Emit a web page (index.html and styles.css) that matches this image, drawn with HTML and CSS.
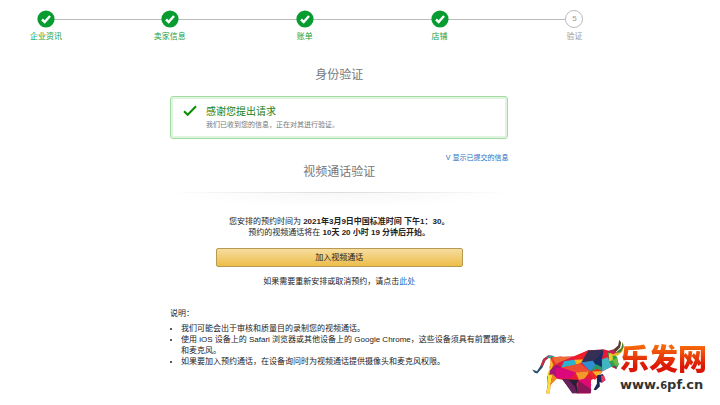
FILE: index.html
```html
<!DOCTYPE html>
<html lang="zh-CN">
<head>
<meta charset="utf-8">
<title>身份验证</title>
<meta name="viewport" content="width=device-width, initial-scale=1">
<link rel="stylesheet" href="styles.css">
</head>
<body>
<ol class="steps">
  <li class="step"><svg class="dot" viewBox="0 0 18 18" aria-hidden="true"><circle cx="9" cy="9" r="8.6"/><path d="M5 9.5 7.7 12 13 6"/></svg><span class="label">企业资讯</span></li>
  <li class="step"><svg class="dot" viewBox="0 0 18 18" aria-hidden="true"><circle cx="9" cy="9" r="8.6"/><path d="M5 9.5 7.7 12 13 6"/></svg><span class="label">卖家信息</span></li>
  <li class="step"><svg class="dot" viewBox="0 0 18 18" aria-hidden="true"><circle cx="9" cy="9" r="8.6"/><path d="M5 9.5 7.7 12 13 6"/></svg><span class="label">账单</span></li>
  <li class="step"><svg class="dot" viewBox="0 0 18 18" aria-hidden="true"><circle cx="9" cy="9" r="8.6"/><path d="M5 9.5 7.7 12 13 6"/></svg><span class="label">店铺</span></li>
  <li class="step pending"><span class="dot number">5</span><span class="label">验证</span></li>
</ol>

<main class="content">
  <h1 class="title">身份验证</h1>
  <section class="alert">
    <svg class="alert-icon" viewBox="0 0 14 12" aria-hidden="true"><path d="M1 6.2 4.7 9.8 13 1.2"/></svg>
    <div>
      <h2 class="alert-title">感谢您提出请求</h2>
      <p class="alert-text">我们已收到您的信息，正在对其进行验证。</p>
    </div>
  </section>
  <a class="details" href="#">V 显示已提交的信息</a>
  <h1 class="title">视频通话验证</h1>
  <div class="divider"></div>
  <section class="booking">
    <p>您安排的预约时间为 <b>2021年3月9日中国标准时间 下午1：30。</b></p>
    <p>预约的视频通话将在 <b>10天 20 小时 19 分钟后开始。</b></p>
    <button class="join" type="button">加入视频通话</button>
    <p>如果需要重新安排或取消预约，请点击<a href="#">此处</a></p>
  </section>
  <section class="notes">
    <p>说明：</p>
    <ul>
      <li>我们可能会出于审核和质量目的录制您的视频通话。</li>
      <li>使用 iOS 设备上的 Safari 浏览器或其他设备上的 Google Chrome，这些设备须具有前置摄像头<br>和麦克风。</li>
      <li>如果要加入预约通话，在设备询问时为视频通话提供摄像头和麦克风权限。</li>
    </ul>
  </section>
</main>

<aside class="brand">
  <svg class="bull" viewBox="30 24 285 172" aria-hidden="true">
    <path d="M36 119 50 124 61 108 69 87 84 77 101 78 99 84 85 84 76 91 67 113 51 131 42 128Z" fill="#264e70"/>
    <path d="M61 108 69 87 84 77 101 78 99 84 85 84 76 91 67 110Z" fill="#c72c42"/>
    <path d="M78 82 92 77 104 80 95 87Z" fill="#23a79b"/>
    <path d="M92 82 160 80 205 61 252 59 280 66 296 104 290 117 273 111 247 125 234 141 214 151 210 191 170 191 156 183 127 150 107 146 91 166 89 191 78 191 83 163 81 142 90 118Z" fill="#e51b34"/>
    <path d="M94 83 126 79 108 107 90 126 88 110 96 99Z" fill="#f0402b"/>
    <path d="M96 82 164 80 132 96 110 105Z" fill="#ed6b35"/>
    <path d="M91 84 99 105 85 142 82 132 90 115Z" fill="#f2c522"/>
    <path d="M90 121 108 103 124 112 104 146 83 161Z" fill="#a51572"/>
    <path d="M83 136 97 134 91 164 89 191 78 191 84 162Z" fill="#f6e534"/>
    <path d="M97 132 111 146 91 166Z" fill="#f18525"/>
    <path d="M108 102 160 80 164 91 145 104Z" fill="#df174b"/>
    <path d="M132 94 163 90 169 105 123 114Z" fill="#27b6ce"/>
    <path d="M163 81 205 61 227 64 203 88 163 90Z" fill="#ef1d28"/>
    <path d="M163 90 203 88 184 99 169 105Z" fill="#f6b51c"/>
    <path d="M123 113 181 101 211 124 167 128Z" fill="#ed4d32"/>
    <path d="M106 116 123 113 167 128 150 146 108 145Z" fill="#db087b"/>
    <path d="M167 128 211 124 190 151 177 151Z" fill="#f19a29"/>
    <path d="M127 148 177 151 169 163 176 191 157 191Z" fill="#252036"/>
    <path d="M126 148 145 149 165 172 170 190 157 191Z" fill="#68215b"/>
    <path d="M176 151 205 144 214 164 210 191 172 191Z" fill="#de0c72"/>
    <path d="M175 153 214 178 213 191 172 191Z" fill="#8e1658"/>
    <path d="M205 62 252 59 220 94 184 98Z" fill="#343055"/>
    <path d="M184 98 219 93 229 107 211 124Z" fill="#2d91d1"/>
    <path d="M220 94 249 62 261 79 247 112 229 107Z" fill="#162d66"/>
    <path d="M252 59 277 67 260 91 246 88Z" fill="#e81839"/>
    <path d="M246 88 264 82 276 111 247 124Z" fill="#3fb6c2"/>
    <path d="M211 124 229 103 247 112 245 126 219 125Z" fill="#259a67"/>
    <path d="M203 127 234 117 247 126 225 151Z" fill="#ee2a27"/>
    <path d="M217 125 247 124 234 143Z" fill="#f3b52d"/>
    <path d="M231 137 249 133 257 151 246 159 239 157 240 170 228 182 221 180 231 162Z" fill="#1c2556"/>
    <path d="M243 137 253 138 257 151 246 159Z" fill="#ec3a68"/>
    <path d="M264 65 280 67 292 82 297 104 290 117 279 112 268 94Z" fill="#2ba24d"/>
    <path d="M267 67 278 67 279 91 268 94Z" fill="#e8cf25"/>
    <path d="M278 91 291 84 297 104 288 109Z" fill="#71b843"/>
    <path d="M278 110 289 108 290 118Z" fill="#aa1d61"/>
    <path d="M262 64 282 58 295 47 299 29 304 38 301 53 287 67 269 70Z" fill="#5d3c31"/>
    <path d="M273 70 292 67 305 54 309 36 313 49 308 65 294 77 279 78Z" fill="#e4b71d"/>
    <path d="M286 69 305 54 309 36 311 52 303 67Z" fill="#44812e"/>
    <path d="M263 65 279 60 290 68 280 73Z" fill="#d41b58"/>
  </svg>
  <div class="brand-words">
    <div class="brand-name">乐发网</div>
    <div class="brand-url">www.<small>6</small>pf.cn</div>
  </div>
</aside>
</body>
</html>
```
FILE: styles.css
```css
* { box-sizing: border-box; }
body {
  margin: 0;
  background: #fff;
  color: #222;
  font: 8px/11px "Liberation Sans", "Noto Sans CJK SC", sans-serif;
}
h1, h2, p, ul, ol { margin: 0; padding: 0; font-weight: 400; }
a { color: #1a6fc4; text-decoration: none; }

.steps {
  display: flex;
  position: relative;
  list-style: none;
  padding: 10px 18% 0 30px;
}
.steps::before {
  content: "";
  position: absolute;
  top: 19px;
  left: 46px;
  right: calc(18% + 16px);
  height: 1px;
  background: #bbb;
}
.step { flex: 135 1 0; position: relative; color: #15a03c; }
.step:first-child { flex-grow: 124; }
.step:last-child { flex: 0 0 32px; }
.dot { display: block; width: 18px; height: 18px; margin-left: 7px; }
.dot circle { fill: #069c2f; }
.dot path { fill: none; stroke: #fff; stroke-width: 2.4; }
.number {
  border: 1px solid #bbb;
  border-radius: 50%;
  background: #fff;
  line-height: 16px;
  text-align: center;
}
.label { display: block; width: 32px; margin-top: 3px; text-align: center; white-space: nowrap; }
.pending { color: #999; }

.content { width: 47%; margin: 24px 0 0 170px; }
.title { color: #777; font-size: 12px; line-height: 18px; text-align: center; }
.alert {
  display: flex;
  gap: 9px;
  margin-top: 12px;
  padding: 7px 10px 7px 12px;
  border: 1px solid #a4dba4;
  border-radius: 3px;
  box-shadow: inset 0 0 0 2px #dff5df;
}
.alert-icon { flex: none; width: 14px; height: 12px; margin-top: 1px; }
.alert-icon path { fill: none; stroke: #089000; stroke-width: 2; }
.alert-title { color: #178217; font-size: 10px; line-height: 15px; }
.alert-text { color: #777; font-size: 7px; line-height: 12px; }
.details { display: block; margin: 14px 0 0; font-size: 7px; line-height: 10px; text-align: right; }
.divider {
  height: 16px;
  margin: 11px 0 8px;
  background:
    linear-gradient(90deg, transparent, #ddd 50%, transparent) top / 100% 1px no-repeat,
    radial-gradient(ellipse at top, #f7f7f7, #fff 70%);
}
.booking { text-align: center; }
.join {
  display: block;
  width: 73%;
  height: 19px;
  margin: 10px auto 9px;
  padding: 0;
  border: 1px solid #b89b52;
  border-radius: 2px;
  background: linear-gradient(#f6dda0, #edbd48);
  color: #222;
  font: inherit;
}
.notes { margin-top: 21px; }
.notes ul { margin-top: 4px; padding-left: 11px; white-space: nowrap; }

.brand { position: absolute; left: 530px; top: 338px; display: flex; }
.bull { width: 95px; height: 57px; }
.brand-words { margin-left: -5px; }
.brand-name {
  background: linear-gradient(#f76a0b 20%, #dc1606 75%);
  background-clip: text;
  color: transparent;
  font: 900 29px/38px "Noto Sans CJK SC", sans-serif;
}
.brand-url { color: #333; font: bold 13px/18px "DejaVu Sans", sans-serif; }
.brand-url small { font-size: 10px; }
```
